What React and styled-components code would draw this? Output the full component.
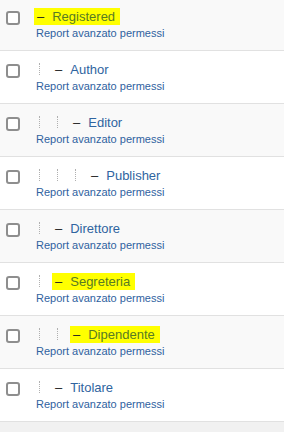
import React from "react";
import styled, { createGlobalStyle } from "styled-components";

const GlobalStyle = createGlobalStyle`
  html, body {
    margin: 0;
    padding: 0;
    background: #f1f1f1;
    font-family: "Liberation Sans", Arial, sans-serif;
  }
`;

const List = styled.div`
  display: flex;
  flex-direction: column;
  margin-top: -2px;
`;

const Row = styled.div`
  display: flex;
  align-items: flex-start;
  height: 53px;
  box-sizing: border-box;
  padding: 9px 0 0 6px;
  background: ${(p) => (p.$odd ? "#f9f9f9" : "#ffffff")};
  border-bottom: 1px solid #e1e1e1;
`;

const Check = styled.span`
  flex: none;
  width: 14px;
  height: 14px;
  box-sizing: border-box;
  margin-top: 4px;
  border: 2px solid #8e8e8e;
  border-radius: 3px;
  background: #fff;
`;

const Content = styled.div`
  display: flex;
  flex-direction: column;
  margin-left: 16px;
`;

const TitleLine = styled.div`
  display: flex;
  align-items: center;
  height: 18px;
  font-size: 13px;
`;

const Guide = styled.span`
  flex: none;
  width: 15px;
  height: 12px;
  margin-left: 3px;
  box-sizing: border-box;
  border-left: 1px dotted #b0b0b0;
`;

const Mark = styled.span`
  display: inline-flex;
  align-items: center;
  height: 17px;
  padding: ${(p) => (p.$on ? "0 5px 0 3px" : "0")};
  margin-left: ${(p) => (p.$on ? "-2px" : "1px")};
  background: ${(p) => (p.$on ? "#ffff00" : "transparent")};
  color: ${(p) => (p.$on ? "#587b24" : "#2f64a0")};
`;

const Dash = styled.span`
  color: #222;
  margin-right: 8px;
`;

const Report = styled.a`
  display: block;
  height: 16px;
  line-height: 16px;
  font-size: 11px;
  color: #2f62a0;
  text-decoration: none;
`;

const roles = [
  { name: "Registered", level: 0, mark: true },
  { name: "Author", level: 1 },
  { name: "Editor", level: 2 },
  { name: "Publisher", level: 3 },
  { name: "Direttore", level: 1 },
  { name: "Segreteria", level: 1, mark: true },
  { name: "Dipendente", level: 2, mark: true },
  { name: "Titolare", level: 1 },
];

export default function App() {
  return (
    <>
      <GlobalStyle />
      <List>
        {roles.map((r, i) => (
          <Row key={r.name} $odd={i % 2 === 0}>
            <Check />
            <Content>
              <TitleLine>
                {Array.from({ length: r.level }).map((_, j) => (
                  <Guide key={j} />
                ))}
                <Mark $on={r.mark}>
                  <Dash>–</Dash>
                  {r.name}
                </Mark>
              </TitleLine>
              <Report href="#">Report avanzato permessi</Report>
            </Content>
          </Row>
        ))}
      </List>
    </>
  );
}
